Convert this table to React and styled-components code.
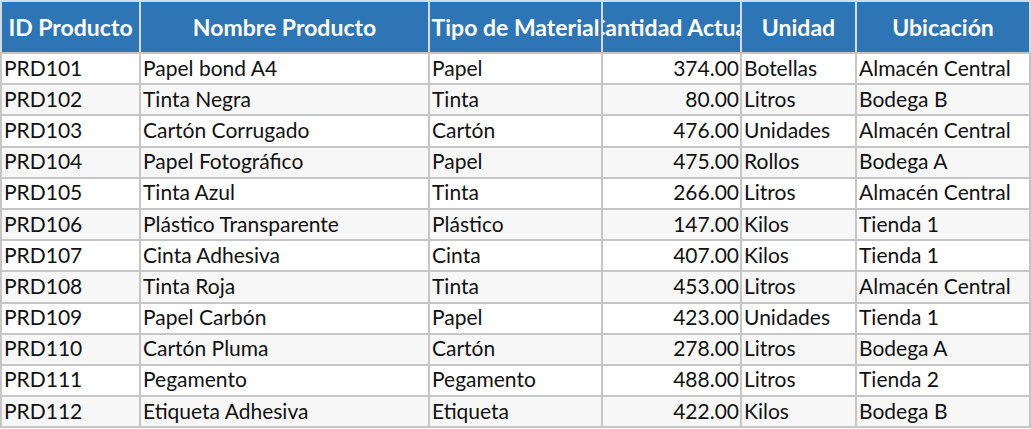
import React from 'react';
import styled, { createGlobalStyle } from 'styled-components';

const GlobalStyle = createGlobalStyle`
  html, body {
    margin: 0;
    padding: 0;
    background: #ffffff;
  }
  body {
    font-family: Lato, "Noto Sans", sans-serif;
  }
`;

const Table = styled.table`
  width: 1029px;
  border-collapse: collapse;
  table-layout: fixed;
  font-family: Lato, "Noto Sans", sans-serif;
  font-size: 21px;
  color: #111111;
`;

const HeadCell = styled.th`
  width: ${(p) => p.$w}px;
  height: 50px;
  padding: 0;
  background-color: #2e75b6;
  color: #ffffff;
  font-weight: bold;
  font-size: 23px;
  border: 2px solid #d6dce4;
  border-bottom-color: #c6c6c6;
  overflow: hidden;
`;

const HeadLabel = styled.div`
  display: flex;
  justify-content: center;
  white-space: nowrap;
`;

const Row = styled.tr`
  height: 31.2px;
  background-color: ${(p) => (p.$odd ? '#f7f7f7' : '#ffffff')};
`;

const Cell = styled.td`
  padding: 0 1px 2px 2px;
  border: 2px solid #c6c6c6;
  text-align: ${(p) => p.$align || 'left'};
  white-space: nowrap;
  overflow: hidden;
  line-height: 26px;
`;

const columns = [
  { label: 'ID Producto', w: 137 },
  { label: 'Nombre Producto', w: 287 },
  { label: 'Tipo de Material', w: 171 },
  { label: 'Cantidad Actual', w: 137 },
  { label: 'Unidad', w: 113 },
  { label: 'Ubicación', w: 172 },
];

const products = [
  ['PRD101', 'Papel bond A4', 'Papel', '374.00', 'Botellas', 'Almacén Central'],
  ['PRD102', 'Tinta Negra', 'Tinta', '80.00', 'Litros', 'Bodega B'],
  ['PRD103', 'Cartón Corrugado', 'Cartón', '476.00', 'Unidades', 'Almacén Central'],
  ['PRD104', 'Papel Fotográfico', 'Papel', '475.00', 'Rollos', 'Bodega A'],
  ['PRD105', 'Tinta Azul', 'Tinta', '266.00', 'Litros', 'Almacén Central'],
  ['PRD106', 'Plástico Transparente', 'Plástico', '147.00', 'Kilos', 'Tienda 1'],
  ['PRD107', 'Cinta Adhesiva', 'Cinta', '407.00', 'Kilos', 'Tienda 1'],
  ['PRD108', 'Tinta Roja', 'Tinta', '453.00', 'Litros', 'Almacén Central'],
  ['PRD109', 'Papel Carbón', 'Papel', '423.00', 'Unidades', 'Tienda 1'],
  ['PRD110', 'Cartón Pluma', 'Cartón', '278.00', 'Litros', 'Bodega A'],
  ['PRD111', 'Pegamento', 'Pegamento', '488.00', 'Litros', 'Tienda 2'],
  ['PRD112', 'Etiqueta Adhesiva', 'Etiqueta', '422.00', 'Kilos', 'Bodega B'],
];

export default function App() {
  return (
    <>
      <GlobalStyle />
      <Table>
        <thead>
          <tr>
            {columns.map((c) => (
              <HeadCell key={c.label} $w={c.w}>
                <HeadLabel>{c.label}</HeadLabel>
              </HeadCell>
            ))}
          </tr>
        </thead>
        <tbody>
          {products.map((p, i) => (
            <Row key={p[0]} $odd={i % 2 === 1}>
              {p.map((v, j) => (
                <Cell key={j} $align={j === 3 ? 'right' : 'left'}>
                  {v}
                </Cell>
              ))}
            </Row>
          ))}
        </tbody>
      </Table>
    </>
  );
}
